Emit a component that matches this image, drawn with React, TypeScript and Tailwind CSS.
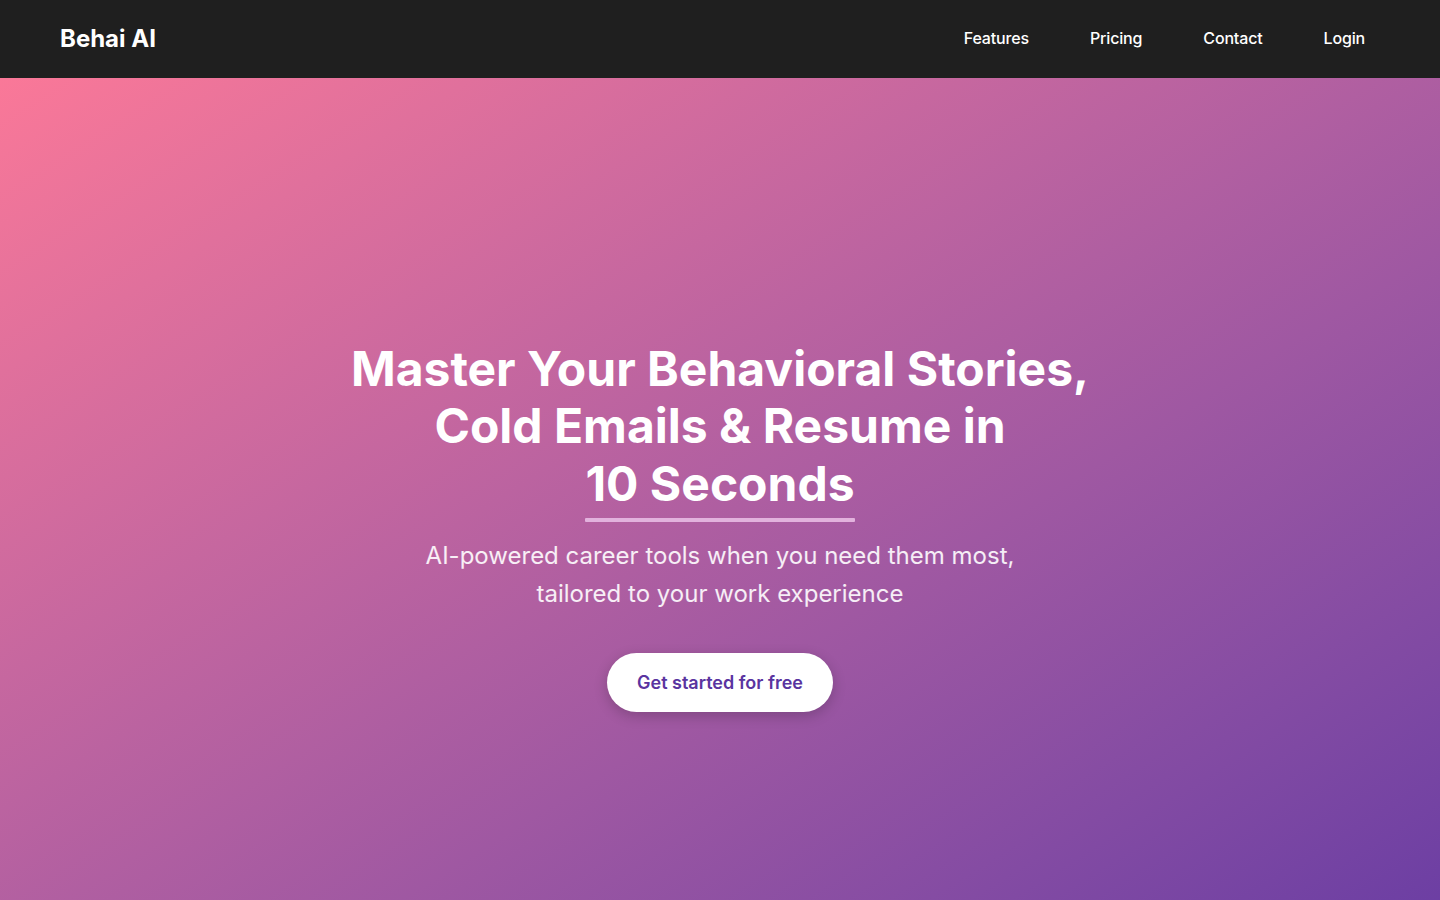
import React from "react";

export default function App() {
  return (
    <div className="w-full font-['Inter',_'Noto_Sans',_sans-serif]">
      <nav className="h-[78px] bg-[#1f1f1f] flex items-center justify-between px-[60px]">
        <div className="text-white text-[24px] font-bold">Behai AI</div>
        <div className="flex items-center gap-[31px] pb-[2px]">
          {["Features", "Pricing", "Contact", "Login"].map((t) => (
            <a key={t} className="text-white text-[16px] font-medium px-[15px] leading-[24px] tracking-[-0.01em]">{t}</a>
          ))}
        </div>
      </nav>
      <section className="min-h-[900px] pb-[4px] bg-gradient-to-br from-[#fa7898] to-[#673ba3] flex flex-col items-center justify-center text-center">
        <h1 className="text-white text-[48px] font-bold leading-[1.2] max-w-[800px]">
          Master Your Behavioral Stories,<br />Cold Emails &amp; Resume in<br />
          <span className="relative inline-block">
            10 Seconds
            <span className="absolute left-0 right-0 bottom-[-10px] h-[4px] bg-[#e2b2dd] rounded-[1px]"></span>
          </span>
        </h1>
        <p className="mt-[25px] text-white/90 text-[24px] leading-[38px] font-normal">
          AI-powered career tools when you need them most,<br />tailored to your work experience
        </p>
        <button className="mt-[40px] bg-white text-[#5a34a0] text-[18px] font-semibold leading-[27px] px-[30px] py-[16px] rounded-full shadow-[0_4px_14px_rgba(0,0,0,0.2)]">
          Get started for free
        </button>
      </section>
    </div>
  );
}
